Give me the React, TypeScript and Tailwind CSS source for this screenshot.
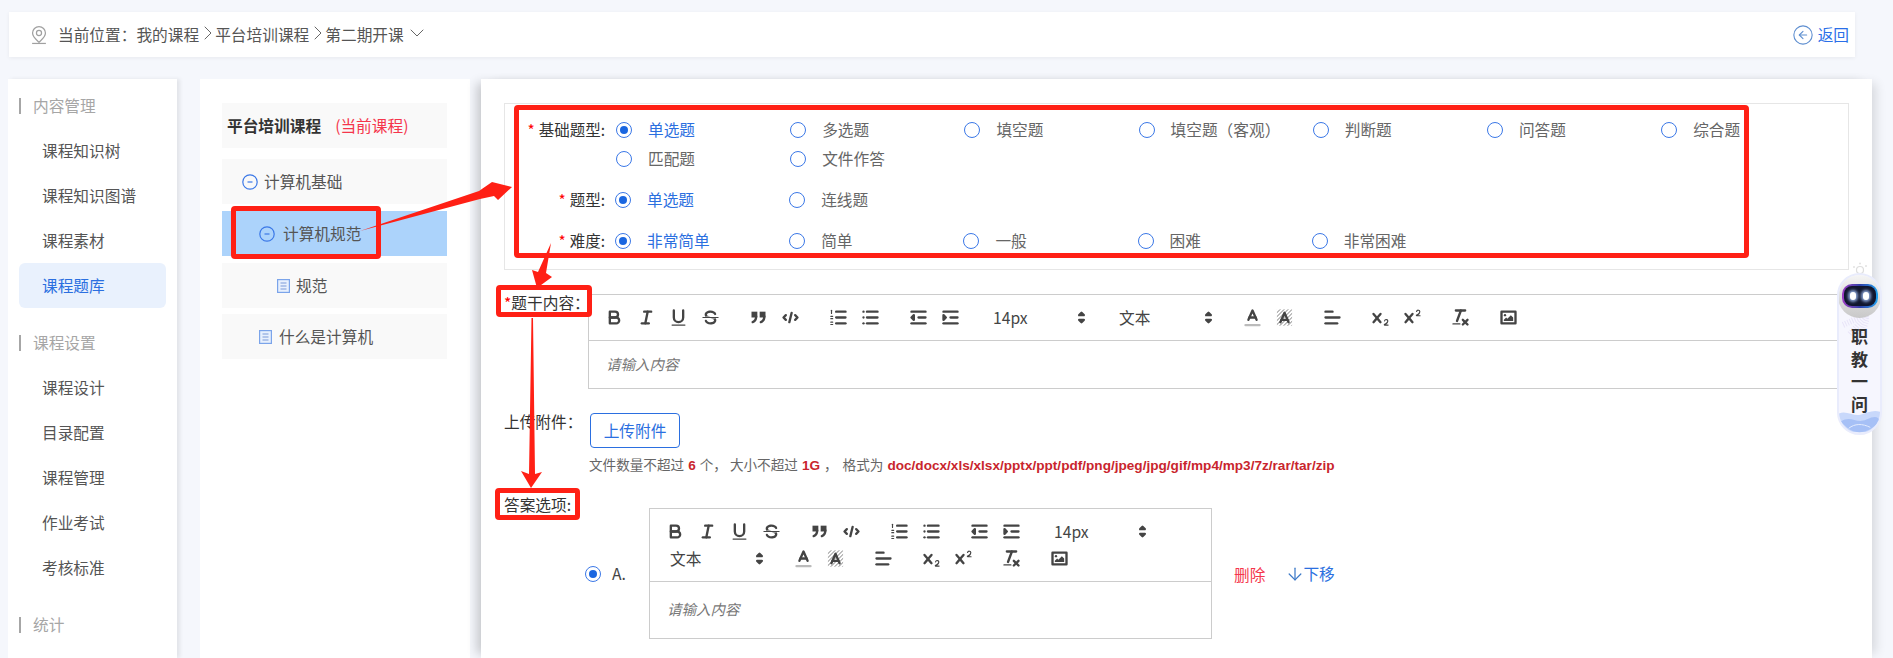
import { useId, type ReactNode } from 'react';
import { ChevronDown, ChevronRight, CircleArrowLeft, ArrowDown } from 'lucide-react';

const menu = [
  { title: '内容管理', items: ['课程知识树', '课程知识图谱', '课程素材', '课程题库'] },
  { title: '课程设置', items: ['课程设计', '目录配置', '课程管理', '作业考试', '考核标准'] },
  { title: '统计', items: [] as string[] },
];

const strokeProps = {
  fill: 'none',
  stroke: '#444',
  strokeWidth: 2,
  strokeLinecap: 'round' as const,
  strokeLinejoin: 'round' as const,
};

function Ic({ children }: { children: ReactNode }) {
  return (
    <svg viewBox="0 0 18 18" className="w-[21px] h-[21px]">
      {children}
    </svg>
  );
}

function Bg() {
  const id = useId();
  return (
    <Ic>
      <defs>
        <pattern id={id} width="2.4" height="2.4" patternUnits="userSpaceOnUse" patternTransform="rotate(45)">
          <rect width="0.7" height="2.4" fill="#888" />
        </pattern>
      </defs>
      <rect x="2.5" y="2" width="13" height="14" fill={`url(#${id})`} />
      <polyline points="5.5 13 9 5 12.5 13" {...strokeProps} />
      <line x1="11.63" x2="6.38" y1="11" y2="11" {...strokeProps} />
    </Ic>
  );
}

const xPath =
  'M9.65,5.241a1,1,0,0,0-1.409.108L6,7.964,3.759,5.349A1,1,0,0,0,2.241,6.651L4.684,9.5,2.241,12.35a1,1,0,0,0,1.519,1.3L6,11.036l2.241,2.615a1,1,0,0,0,1.519-1.3L7.316,9.5,9.759,6.651A1,1,0,0,0,9.65,5.241Z';

const icons: Record<string, ReactNode> = {
  bold: (
    <Ic>
      <path d="M5,4H9.5A2.5,2.5,0,0,1,12,6.5v0A2.5,2.5,0,0,1,9.5,9H5V4Z" {...strokeProps} />
      <path d="M5,9h5.5A2.5,2.5,0,0,1,13,11.5v0A2.5,2.5,0,0,1,10.5,14H5V9Z" {...strokeProps} />
    </Ic>
  ),
  italic: (
    <Ic>
      <line x1="7" x2="13" y1="4" y2="4" {...strokeProps} />
      <line x1="5" x2="11" y1="14" y2="14" {...strokeProps} />
      <line x1="8" x2="10" y1="14" y2="4" {...strokeProps} />
    </Ic>
  ),
  underline: (
    <Ic>
      <path d="M5,3V9a4,4,0,0,0,8,0V3" {...strokeProps} />
      <rect x="3" y="15" width="12" height="1" rx=".5" fill="#444" />
    </Ic>
  ),
  strike: (
    <Ic>
      <line x1="15.5" x2="2.5" y1="9" y2="9" {...strokeProps} strokeWidth={1} />
      <path
        fill="#444"
        d="M9.007,8C6.542,7.791,6,7.519,6,6.5,6,5.792,7.283,5,9,5c1.571,0,2.765.679,2.969,1.309a1,1,0,0,0,1.9-.617C13.356,4.106,11.354,3,9,3,6.2,3,4,4.538,4,6.5a3.2,3.2,0,0,0,.5,1.843Z"
      />
      <path
        fill="#444"
        d="M8.984,10C11.457,10.208,12,10.479,12,11.5c0,.708-1.283,1.5-3,1.5-1.571,0-2.765-.679-2.969-1.309a1,1,0,1,0-1.9.617C4.644,13.894,6.646,15,9,15c2.8,0,5-1.538,5-3.5a3.2,3.2,0,0,0-.5-1.843Z"
      />
    </Ic>
  ),
  quote: (
    <Ic>
      <rect x="4" y="5" width="3" height="3" fill="#444" stroke="#444" strokeWidth={2} />
      <rect x="11" y="5" width="3" height="3" fill="#444" stroke="#444" strokeWidth={2} />
      <path d="M7,8c0,4.031-3,5-3,5" {...strokeProps} />
      <path d="M14,8c0,4.031-3,5-3,5" {...strokeProps} />
    </Ic>
  ),
  code: (
    <Ic>
      <polyline points="5 7 3 9 5 11" {...strokeProps} />
      <polyline points="13 7 15 9 13 11" {...strokeProps} />
      <line x1="10" x2="8" y1="5" y2="13" {...strokeProps} />
    </Ic>
  ),
  ol: (
    <Ic>
      <line x1="7" x2="15" y1="4" y2="4" {...strokeProps} />
      <line x1="7" x2="15" y1="9" y2="9" {...strokeProps} />
      <line x1="7" x2="15" y1="14" y2="14" {...strokeProps} />
      <line x1="3" x2="3" y1="2.8" y2="5.5" {...strokeProps} strokeWidth={1} />
      <line x1="2.4" x2="4" y1="8" y2="8" {...strokeProps} strokeWidth={1} />
      <line x1="2.4" x2="4" y1="10" y2="10" {...strokeProps} strokeWidth={1} />
      <line x1="2.4" x2="4" y1="13" y2="13" {...strokeProps} strokeWidth={1} />
      <line x1="2.4" x2="4" y1="15" y2="15" {...strokeProps} strokeWidth={1} />
    </Ic>
  ),
  ul: (
    <Ic>
      <line x1="6" x2="15" y1="4" y2="4" {...strokeProps} />
      <line x1="6" x2="15" y1="9" y2="9" {...strokeProps} />
      <line x1="6" x2="15" y1="14" y2="14" {...strokeProps} />
      <line x1="3" x2="3" y1="4" y2="4" {...strokeProps} />
      <line x1="3" x2="3" y1="9" y2="9" {...strokeProps} />
      <line x1="3" x2="3" y1="14" y2="14" {...strokeProps} />
    </Ic>
  ),
  outdent: (
    <Ic>
      <line x1="3" x2="15" y1="14" y2="14" {...strokeProps} />
      <line x1="3" x2="15" y1="4" y2="4" {...strokeProps} />
      <line x1="9" x2="15" y1="9" y2="9" {...strokeProps} />
      <polygon points="5 7 5 11 3 9 5 7" {...strokeProps} fill="#444" />
    </Ic>
  ),
  indent: (
    <Ic>
      <line x1="3" x2="15" y1="14" y2="14" {...strokeProps} />
      <line x1="3" x2="15" y1="4" y2="4" {...strokeProps} />
      <line x1="9" x2="15" y1="9" y2="9" {...strokeProps} />
      <polygon points="3 7 3 11 5 9 3 7" {...strokeProps} fill="#444" />
    </Ic>
  ),
  color: (
    <Ic>
      <line x1="3" x2="15" y1="15.5" y2="15.5" {...strokeProps} stroke="#bbb" />
      <polyline points="5.5 11 9 3 12.5 11" {...strokeProps} />
      <line x1="11.63" x2="6.38" y1="9" y2="9" {...strokeProps} />
    </Ic>
  ),
  bg: <Bg />,
  align: (
    <Ic>
      <line x1="3" x2="15" y1="9" y2="9" {...strokeProps} />
      <line x1="3" x2="13" y1="14" y2="14" {...strokeProps} />
      <line x1="3" x2="9" y1="4" y2="4" {...strokeProps} />
    </Ic>
  ),
  sub: (
    <Ic>
      <path
        fill="#444"
        d="M15.5,15H13.861a3.858,3.858,0,0,0,1.914-2.975,1.8,1.8,0,0,0-1.6-1.751A1.921,1.921,0,0,0,12.021,11.7a0.50013,0.50013,0,1,0,.957.291h0a0.914,0.914,0,0,1,1.053-.725,0.81,0.81,0,0,1,.744.762c0,1.077-1.263,1.815-2.32,2.42A0.5,0.5,0,0,0,12.75,16H15.5A0.5,0.5,0,0,0,15.5,15Z"
      />
      <path fill="#444" d={xPath} />
    </Ic>
  ),
  sup: (
    <Ic>
      <path
        fill="#444"
        d="M15.5,7H13.861a4.015,4.015,0,0,0,1.914-2.975,1.8,1.8,0,0,0-1.6-1.751A1.922,1.922,0,0,0,12.021,3.7a0.5,0.5,0,1,0,.957.291,0.917,0.917,0,0,1,1.053-.725,0.81,0.81,0,0,1,.744.762c0,1.077-1.262,1.815-2.32,2.42A0.5,0.5,0,0,0,12.75,8H15.5A0.5,0.5,0,0,0,15.5,7Z"
      />
      <path fill="#444" d={xPath} />
    </Ic>
  ),
  clean: (
    <Ic>
      <line x1="5" x2="13" y1="3" y2="3" {...strokeProps} />
      <line x1="6" x2="9.35" y1="12" y2="3" {...strokeProps} />
      <line x1="11" x2="15" y1="11" y2="15" {...strokeProps} />
      <line x1="15" x2="11" y1="11" y2="15" {...strokeProps} />
      <rect x="2" y="14" width="7" height="1" rx=".5" fill="#444" />
    </Ic>
  ),
  image: (
    <Ic>
      <rect x="3" y="4" width="12" height="10" {...strokeProps} />
      <circle cx="6" cy="7" r="1" fill="#444" />
      <polygon points="5 12 5 11 7 9 8 10 11 7 13 9 13 12 5 12" fill="#444" />
    </Ic>
  ),
};

function Btn({ name, gap }: { name: string; gap?: boolean }) {
  return (
    <span className={`w-8 h-[27px] flex items-center justify-center ${gap ? 'ml-4' : ''}`}>{icons[name]}</span>
  );
}

function Picker({ label, wide }: { label: string; wide?: boolean }) {
  return (
    <span
      className={`h-[27px] flex items-center justify-between pl-[11px] text-[#444] ${
        wide ? 'w-[128px] pr-[17px]' : 'w-[126px] pr-[16px]'
      }`}
    >
      {label}
      <svg viewBox="0 0 18 18" className="w-[21px] h-[21px]">
        <polygon points="7 11 9 13 11 11 7 11" {...strokeProps} fill="#444" />
        <polygon points="7 7 9 5 11 7 7 7" {...strokeProps} fill="#444" />
      </svg>
    </span>
  );
}

function Editor({ className, tall }: { className: string; tall?: boolean }) {
  return (
    <div className={`border border-[#ccc] bg-white shrink-0 ${className}`}>
      <div className="flex flex-wrap pl-[9px] py-[9px] border-b border-[#ccc]">
        <Btn name="bold" />
        <Btn name="italic" />
        <Btn name="underline" />
        <Btn name="strike" />
        <Btn name="quote" gap />
        <Btn name="code" />
        <Btn name="ol" gap />
        <Btn name="ul" />
        <Btn name="outdent" gap />
        <Btn name="indent" />
        <span className="w-4" />
        <Picker label="14px" />
        <Picker label="文本" wide />
        <Btn name="color" />
        <Btn name="bg" />
        <Btn name="align" gap />
        <Btn name="sub" gap />
        <Btn name="sup" />
        <Btn name="clean" gap />
        <Btn name="image" gap />
      </div>
      <div
        className={`pl-[17px] pb-[2px] italic text-[14.5px] text-[#777] flex items-center ${
          tall ? 'h-[56px]' : 'h-[47px]'
        }`}
      >
        请输入内容
      </div>
    </div>
  );
}

function Radio({ label, checked }: { label: string; checked?: boolean }) {
  return (
    <span className="w-[174.2px] h-[29px] flex items-center gap-4">
      <span className="w-4 h-4 rounded-full border border-[#3b78e7] flex items-center justify-center shrink-0">
        {checked && <span className="w-2 h-2 rounded-full bg-[#1a66e0]" />}
      </span>
      <span className={checked ? 'text-[#2b6fe0]' : 'text-[#666]'}>{label}</span>
    </span>
  );
}

function Minus() {
  return (
    <svg viewBox="0 0 16 16" className="w-4 h-4">
      <circle cx="8" cy="8" r="7.2" fill="none" stroke="#3b78e7" strokeWidth="1.2" />
      <line x1="5.5" x2="10.5" y1="8" y2="8" stroke="#3b78e7" strokeWidth="1.2" />
    </svg>
  );
}

function Doc() {
  return (
    <svg viewBox="0 0 13 14" className="w-[13px] h-[14px]">
      <rect x="0.6" y="0.6" width="11.8" height="12.8" fill="#e8f0fd" stroke="#7ba4ea" strokeWidth="1.2" />
      <line x1="3.5" x2="9.5" y1="4" y2="4" stroke="#7a9ad8" />
      <line x1="3.5" x2="9.5" y1="7" y2="7" stroke="#7a9ad8" />
      <line x1="3.5" x2="9.5" y1="10" y2="10" stroke="#7a9ad8" />
    </svg>
  );
}

function Robot() {
  return (
    <div className="absolute left-[1837px] top-[262px] w-[45px] flex flex-col items-center">
      <svg viewBox="0 0 20 12" className="w-5 h-3">
        <circle cx="10" cy="8" r="3.5" fill="none" stroke="#ddd" strokeWidth="1.2" />
        <circle cx="4" cy="5" r="1" fill="#e2e2e2" />
        <circle cx="10" cy="1.5" r="1" fill="#e2e2e2" />
        <circle cx="16" cy="4" r="1" fill="#e2e2e2" />
      </svg>
      <div className="w-[45px] h-[162px] -mt-px rounded-full bg-[#f6f6fe] border-2 border-[#e9ecfc] flex flex-col items-center overflow-hidden relative">
        {/* wave sits under the last character */}
        <svg viewBox="0 0 46 24" className="absolute left-[-2px] bottom-0 w-[45px] h-[25px]">
          <path d="M0 6C8 0 16 8 24 6S38 0 46 4V24H0Z" fill="#c8d8fb" />
          <path d="M4 13C14 6 20 16 30 11S42 9 44 12C38 20 30 24 23 24S10 20 4 13Z" fill="#a6c0f6" />
          <path d="M12 20C18 15 26 15 34 19" stroke="#e4ecfd" fill="none" />
        </svg>
        <svg viewBox="0 0 30 30" className="absolute left-0 top-[38px] w-[30px] h-[30px]">
          <path d="M30 0L4 12M30 0L10 22M30 0L20 28" stroke="#e8e4f8" strokeWidth="6" fill="none" strokeDasharray="1 1.5" />
        </svg>
        <div className="-mt-px w-[43px] h-[44px] rounded-full bg-gradient-to-b from-[#f6f6f6] to-[#c8c8c8] flex items-center justify-center shrink-0 relative">
          <div className="w-[36px] h-[24px] rounded-[10px] bg-gradient-to-r from-[#a03cc4] via-[#2d3fa8] to-[#1ea2f0] p-[2px]">
            <div className="w-full h-full rounded-[8px] bg-[#10162e] flex items-center justify-center gap-[7px]">
              <span className="w-[6px] h-[8px] rounded-full bg-white shadow-[0_0_3px_2px_rgba(170,200,255,0.8)]" />
              <span className="w-[6px] h-[8px] rounded-full bg-white shadow-[0_0_3px_2px_rgba(170,200,255,0.8)]" />
            </div>
          </div>
        </div>
        <div className="relative mt-[7px] flex flex-col items-center text-[#333] font-bold text-[17px] leading-[22.5px]">
          <span>职</span>
          <span>教</span>
          <span>一</span>
          <span>问</span>
        </div>
      </div>
    </div>
  );
}

function AnswerMark() {
  return (
    <>
      <span className="w-4 h-4 rounded-full border border-[#3b78e7] flex items-center justify-center shrink-0">
        <span className="w-2 h-2 rounded-full bg-[#1a66e0]" />
      </span>
      <span className="ml-[11px] w-[17px] text-[#444]">A.</span>
    </>
  );
}

export default function App() {
  return (
    <div className="relative w-[1893px] h-[658px] overflow-hidden bg-[#f5f7fc] pt-3 font-['Noto_Sans_CJK_SC',sans-serif] text-[15.7px] text-[#555]">
      {/* breadcrumb */}
      <div className="ml-[9px] w-[1846px] h-[45px] bg-white shadow-[0_1px_4px_rgba(0,0,0,0.06)] flex items-center pl-5 pr-[6px]">
        <svg viewBox="0 0 18 18" className="w-5 h-5" fill="none" stroke="#a0a0a0" strokeWidth="1.1">
          <path d="M9 1.5a5.8 5.8 0 0 0-5.8 5.8C3.2 11 7 13.6 9 15.6c2-2 5.8-4.6 5.8-8.3A5.8 5.8 0 0 0 9 1.5Z" />
          <circle cx="9" cy="7.2" r="2.3" />
          <path d="M2.8 16.6h12.4" />
        </svg>
        <span className="ml-[9px]">当前位置：</span>
        <span>我的课程</span>
        <ChevronRight className="w-6 h-6 -ml-[3px] -mr-[5px] -mt-1 text-[#666]" strokeWidth={1} />
        <span>平台培训课程</span>
        <ChevronRight className="w-6 h-6 -ml-[3px] -mr-[5px] -mt-1 text-[#666]" strokeWidth={1} />
        <span>第二期开课</span>
        <ChevronDown className="w-6 h-6 ml-px -mt-1 text-[#666]" strokeWidth={1} />
        <CircleArrowLeft className="w-[22px] h-[22px] ml-auto text-[#5f8fd0]" strokeWidth={1.2} />
        <span className="ml-[4px] text-[#2a6fe8]">返回</span>
      </div>

      <div className="flex mt-[22px] h-[579px]">
        {/* side menu */}
        <aside className="ml-2 w-[169px] bg-white shadow-[3px_0_4px_rgba(0,0,0,0.08)] pt-1 shrink-0">
          {menu.map((group) => (
            <div key={group.title} className="mb-3">
              <div className="h-[45px] flex items-center pl-[11px] text-[#a6a6a6]">
                <span className="w-[2px] h-4 bg-[#a6a6a6] mr-3" />
                {group.title}
              </div>
              {group.items.map((item) => (
                <div
                  key={item}
                  className={`mx-[11px] h-[45px] flex items-center pl-[23px] rounded-md ${
                    item === '课程题库' ? 'bg-[#e9f1fd] text-[#2b6fe0]' : ''
                  }`}
                >
                  {item}
                </div>
              ))}
            </div>
          ))}
        </aside>

        {/* course tree */}
        <section className="ml-[23px] w-[270px] bg-white shrink-0 pt-6 pl-[22px] pr-[23px]">
          <div className="h-[45px] bg-[#f9f9f9] flex items-center pl-[5px]">
            <b className="text-[#333] font-bold">平台培训课程</b>
            <span className="ml-[14px] text-[#f5364c]">(当前课程)</span>
          </div>
          <div className="h-[45px] mt-[11px] bg-[#f9f9f9] flex items-center pl-5 gap-[6px]">
            <Minus />
            计算机基础
          </div>
          <div className="h-[45px] mt-[7px] bg-[#acd3fb] flex items-center pl-[37px] gap-2">
            <Minus />
            计算机规范
          </div>
          <div className="h-[45px] mt-[7px] bg-[#f9f9f9] flex items-center pl-[55px] gap-[6px]">
            <Doc />
            规范
          </div>
          <div className="h-[45px] mt-[6px] bg-[#f9f9f9] flex items-center pl-[37px] gap-[7px]">
            <Doc />
            什么是计算机
          </div>
        </section>

        {/* question form */}
        <main className="ml-[11px] w-[1391px] bg-white shrink-0 pt-6 shadow-[-8px_0_10px_-4px_rgba(0,0,0,0.2),8px_0_10px_-4px_rgba(0,0,0,0.12)]">
          <div className="ml-[23px] w-[1345px] h-[167px] border border-[#e6e6e6] pt-[11px]">
            <div className="flex">
              <span className="w-[100px] h-[29px] flex items-center justify-end text-[#333] text-[15.5px] shrink-0">
                <i className="text-[#f00] not-italic mr-1">*</i>基础题型:
              </span>
              <div className="ml-[11px] w-[1220px] flex flex-wrap">
                <Radio label="单选题" checked />
                <Radio label="多选题" />
                <Radio label="填空题" />
                <Radio label="填空题（客观）" />
                <Radio label="判断题" />
                <Radio label="问答题" />
                <Radio label="综合题" />
                <Radio label="匹配题" />
                <Radio label="文件作答" />
              </div>
            </div>
            <div className="flex mt-3">
              <span className="w-[100px] h-[29px] flex items-center justify-end text-[#333] text-[15.5px] shrink-0">
                <i className="text-[#f00] not-italic mr-1">*</i>题型:
              </span>
              <div className="ml-[10px] flex">
                <Radio label="单选题" checked />
                <Radio label="连线题" />
              </div>
            </div>
            <div className="flex mt-3">
              <span className="w-[100px] h-[29px] flex items-center justify-end text-[#333] text-[15.5px] shrink-0">
                <i className="text-[#f00] not-italic mr-1">*</i>难度:
              </span>
              <div className="ml-[10px] flex">
                <Radio label="非常简单" checked />
                <Radio label="简单" />
                <Radio label="一般" />
                <Radio label="困难" />
                <Radio label="非常困难" />
              </div>
            </div>
          </div>

          <div className="flex mt-6 ml-[23px]">
            <span className="w-[84px] leading-[18px] text-[#333] shrink-0 whitespace-nowrap">
              <i className="text-[#f00] not-italic">*</i>题干内容：
            </span>
            <Editor className="w-[1250px]" />
          </div>

          <div className="flex mt-6 ml-[23px]">
            <span className="w-[86px] leading-[18px] text-[#333] shrink-0 whitespace-nowrap">上传附件：</span>
            <div>
              <button className="w-[90px] h-[35px] border border-[#2b6fe0] rounded text-[#2b6fe0]">上传附件</button>
              <p className="-ml-px mt-[6px] h-5 leading-5 text-[13.6px] text-[#666] whitespace-nowrap">
                文件数量不超过
                <b className="mx-1 font-['Liberation_Sans',sans-serif] text-[#c9252d]">6</b>个，
                <span className="ml-[3px]">大小不超过</span>
                <b className="mx-1 font-['Liberation_Sans',sans-serif] text-[#c9252d]">1G</b>，
                <span className="ml-[5px]">格式为</span>
                <b className="ml-1 font-['Liberation_Sans',sans-serif] text-[#c9252d]">
                  doc/docx/xls/xlsx/pptx/ppt/pdf/png/jpeg/jpg/gif/mp4/mp3/7z/rar/tar/zip
                </b>
              </p>
            </div>
          </div>

          <div className="mt-[22px]">
            <span className="block ml-[23px] h-[18px] leading-[18px] text-[#333]">答案选项:</span>
            <div className="flex items-center -mt-[6px] ml-[104px]">
              <AnswerMark />
              <Editor className="w-[563px] ml-5" tall />
              <span className="ml-[22px] text-[#f5364c] mt-[2px]">删除</span>
              <ArrowDown className="w-5 h-5 ml-[20px] -mr-[2px] text-[#3d7ac8]" strokeWidth={1.5} />
              <span className="text-[#2b6fe0]">下移</span>
            </div>
            <div className="ml-[168px] mt-[19px] w-[562px] h-10 border border-[#ccc]" />
          </div>
        </main>
      </div>

      <Robot />

      {/* red annotations drawn on top of the capture */}
      <div className="absolute left-[514px] top-[105px] w-[1235px] h-[153px] border-[5px] border-[#ff2015] rounded" />
      <div className="absolute left-[231px] top-[206px] w-[150px] h-[53px] border-[5px] border-[#ff2015] rounded" />
      <div className="absolute left-[496px] top-[285px] w-[96px] h-[32px] border-[5px] border-[#ff2015] rounded" />
      <div className="absolute left-[495px] top-[488px] w-[85px] h-[32px] border-[5px] border-[#ff2015] rounded" />
      <svg viewBox="0 0 1893 658" className="absolute inset-0 w-[1893px] h-[658px] pointer-events-none">
        <polygon points="360,231 479,191 492,182 512,187 498,200 494,196 480,199" fill="#ff2015" />
        <polygon points="551,243 546,273 552,277 537,288 532,270 538,272" fill="#ff2015" />
        <polygon points="531.5,318 533,318 535,474 542,472 531,488 521,471 529,474" fill="#ff2015" />
      </svg>
    </div>
  );
}
